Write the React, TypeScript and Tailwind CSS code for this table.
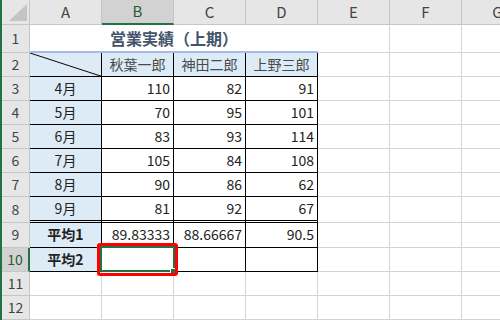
import React from 'react';

const COLS = ['A', 'B', 'C', 'D', 'E', 'F', 'G'];

const MONTHS: [string, number, number, number][] = [
  ['4月', 110, 82, 91],
  ['5月', 70, 95, 101],
  ['6月', 83, 93, 114],
  ['7月', 105, 84, 108],
  ['8月', 90, 86, 62],
  ['9月', 81, 92, 67],
];

const grid = 'w-[72px] shrink-0 border-r border-b border-[#d4d4d4]';
const boxed = 'w-[72px] shrink-0 border-r border-b border-black';

const RowHead: React.FC<{ n: number; selected?: boolean }> = ({ n, selected }) => (
  <div
    className={
      selected
        ? 'w-[28px] shrink-0 flex items-center justify-center bg-[#d2d2d2] border-b border-[#c6c6c6] border-r-2 border-r-[#217346] text-[#1f5c3a]'
        : 'w-[28px] shrink-0 flex items-center justify-center bg-[#e6e6e6] border-b border-r border-[#c6c6c6] text-[#444]'
    }
  >
    {n}
  </div>
);

const Blank = () => (
  <>
    <div className={grid} />
    <div className={grid} />
    <div className={grid} />
  </>
);

const App: React.FC = () => {
  return (
    <div className="w-[500px] h-[320px] overflow-hidden bg-white flex text-[14px] text-[#222] font-['Noto_Sans_CJK_JP','Noto_Sans',sans-serif]">
      <div className="w-[2px] shrink-0 bg-[#217346]" />
      <div className="flex flex-col">
        {/* column letters */}
        <div className="flex h-[25px] text-[15px] text-[#444]">
          <div className="w-[28px] shrink-0 bg-[#e6e6e6] border-r border-b border-[#c6c6c6] relative">
            <svg className="absolute left-[7px] top-[4px]" width="18" height="17" viewBox="0 0 18 17">
              <polygon points="0,17 18,0 18,17" fill="#c4c4c4" />
            </svg>
          </div>
          {COLS.map((c) =>
            c === 'B' ? (
              <div
                key={c}
                className="w-[72px] shrink-0 flex items-center justify-center bg-[#d2d2d2] border-r border-[#c6c6c6] border-b-2 border-b-[#217346] text-[#1f5c3a]"
              >
                {c}
              </div>
            ) : (
              <div
                key={c}
                className="w-[72px] shrink-0 flex items-center justify-center bg-[#e6e6e6] border-r border-b border-[#c6c6c6]"
              >
                {c}
              </div>
            )
          )}
        </div>

        {/* 1: title */}
        <div className="flex h-[29px]">
          <RowHead n={1} />
          <div className="w-[288px] shrink-0 flex items-center justify-center border-b-2 border-[#a7bbe2] text-[16px] font-bold text-[#44546a]">
            営業実績（上期）
          </div>
          <Blank />
        </div>

        {/* 2: names */}
        <div className="flex h-[25px]">
          <RowHead n={2} />
          <div className={`${boxed} bg-[#ddebf7] relative`}>
            <svg className="absolute inset-0 w-full h-full" viewBox="0 0 71 24" preserveAspectRatio="none">
              <line x1="0" y1="0" x2="71" y2="24" stroke="#000" strokeWidth="1" />
            </svg>
          </div>
          {['秋葉一郎', '神田二郎', '上野三郎'].map((name) => (
            <div key={name} className={`${boxed} bg-[#ddebf7] flex items-center justify-center text-[#4a4a4a]`}>
              {name}
            </div>
          ))}
          <Blank />
        </div>

        {/* 3-8: monthly figures */}
        {MONTHS.map(([m, b, c, d], i) => (
          <div key={m} className={i === 5 ? 'flex h-[27px]' : 'flex h-[25px]'}>
            <RowHead n={i + 3} />
            <div
              className={`${boxed} bg-[#ddebf7] flex items-center justify-center ${i === 5 ? 'border-b-[3px] border-double' : ''}`}
            >
              {m}
            </div>
            {[b, c, d].map((v, j) => (
              <div
                key={j}
                className={`${boxed} flex items-center justify-end pr-[3px] ${i === 5 ? 'border-b-[3px] border-double' : ''}`}
              >
                {v}
              </div>
            ))}
            <Blank />
          </div>
        ))}

        {/* 9: average 1 */}
        <div className="flex h-[25px]">
          <RowHead n={9} />
          <div className={`${boxed} bg-[#ddebf7] flex items-center justify-center font-bold`}>平均1</div>
          {['89.83333', '88.66667', '90.5'].map((v) => (
            <div key={v} className={`${boxed} flex items-center justify-end pr-[3px]`}>
              {v}
            </div>
          ))}
          <Blank />
        </div>

        {/* 10: average 2, B10 active */}
        <div className="flex h-[25px]">
          <RowHead n={10} selected />
          <div className={`${boxed} bg-[#ddebf7] flex items-center justify-center font-bold`}>平均2</div>
          <div className={`${boxed} relative`}>
            <div className="absolute -left-[2px] -top-[2px] -right-[2px] -bottom-[1px] border-2 border-[#217346] z-10" />
            <div className="absolute -right-[3px] -bottom-[3px] w-[6px] h-[6px] bg-[#217346] border border-white z-20" />
            <div className="absolute -inset-[5px] border-[3px] border-[#ff0000] rounded-[3px] z-20" />
          </div>
          <div className={boxed} />
          <div className={boxed} />
          <Blank />
        </div>

        {/* 11-12: empty */}
        {[11, 12].map((n) => (
          <div key={n} className="flex h-[25px]">
            <RowHead n={n} />
            <div className={grid} />
            <div className={grid} />
            <div className={grid} />
            <div className={grid} />
            <Blank />
          </div>
        ))}
      </div>
    </div>
  );
};

export default App;
